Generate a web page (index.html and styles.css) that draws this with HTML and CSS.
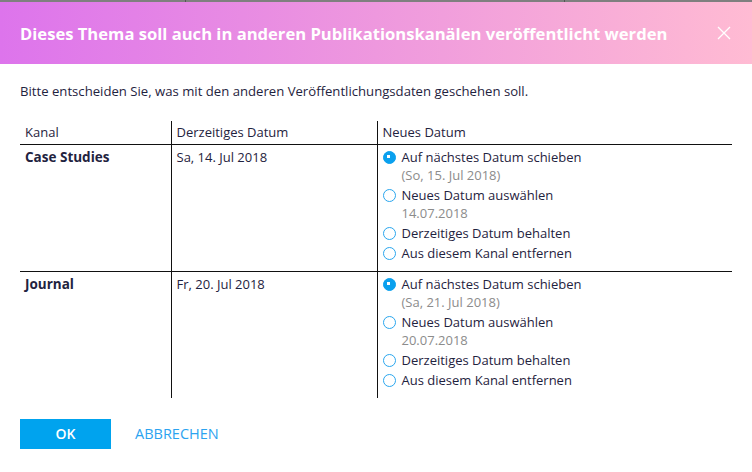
FILE: index.html
```html
<!DOCTYPE html>
<html lang="de">
<head>
<meta charset="utf-8">
<link rel="stylesheet" href="styles.css">
</head>
<body>
<div class="backdrop"></div>
<div class="dialog">
  <header class="dlg-head">
    <h1 class="dlg-title">Dieses Thema soll auch in anderen Publikationskanälen veröffentlicht werden</h1>
    <button class="close" aria-label="Schließen">
      <svg width="14" height="14" viewBox="0 0 14 14"><path d="M1 1 L13 13 M13 1 L1 13" stroke="#fff" stroke-width="1.3" fill="none"/></svg>
    </button>
  </header>
  <div class="dlg-body">
    <p class="intro">Bitte entscheiden Sie, was mit den anderen Veröffentlichungsdaten geschehen soll.</p>
    <table class="channels">
      <thead>
        <tr><th class="c1">Kanal</th><th class="c2">Derzeitiges Datum</th><th class="c3">Neues Datum</th></tr>
      </thead>
      <tbody>
        <tr>
          <td class="c1 name">Case Studies</td>
          <td class="c2 date">Sa, 14. Jul 2018</td>
          <td class="c3">
            <div class="opt"><span class="radio on"></span><div><div class="main">Auf nächstes Datum schieben</div><div class="sub">(So, 15. Jul 2018)</div></div></div>
            <div class="opt"><span class="radio"></span><div><div class="main">Neues Datum auswählen</div><div class="sub">14.07.2018</div></div></div>
            <div class="opt"><span class="radio"></span><div><div class="main">Derzeitiges Datum behalten</div></div></div>
            <div class="opt"><span class="radio"></span><div><div class="main">Aus diesem Kanal entfernen</div></div></div>
          </td>
        </tr>
        <tr>
          <td class="c1 name">Journal</td>
          <td class="c2 date">Fr, 20. Jul 2018</td>
          <td class="c3">
            <div class="opt"><span class="radio on"></span><div><div class="main">Auf nächstes Datum schieben</div><div class="sub">(Sa, 21. Jul 2018)</div></div></div>
            <div class="opt"><span class="radio"></span><div><div class="main">Neues Datum auswählen</div><div class="sub">20.07.2018</div></div></div>
            <div class="opt"><span class="radio"></span><div><div class="main">Derzeitiges Datum behalten</div></div></div>
            <div class="opt"><span class="radio"></span><div><div class="main">Aus diesem Kanal entfernen</div></div></div>
          </td>
        </tr>
      </tbody>
    </table>
    <div class="actions">
      <button class="btn-ok">OK</button>
      <button class="btn-cancel">ABBRECHEN</button>
    </div>
  </div>
</div>
</body>
</html>
```

FILE: styles.css
```css
* { box-sizing: border-box; }
html, body { margin: 0; padding: 0; background: #fff; }
body {
  font-family: "Open Sans", "Noto Sans", sans-serif;
  color: #1f2340;
  width: 752px;
  height: 472px;
  overflow: hidden;
}
.backdrop {
  height: 2px;
  background:
    linear-gradient(to right, transparent 185px, #555 185px, #555 186px, transparent 186px, transparent 564px, #555 564px, #555 565px, transparent 565px),
    #7f7f7f;
}
.dlg-head {
  height: 62px;
  display: flex;
  align-items: center;
  justify-content: space-between;
  padding: 0 21px 0 20px;
  background: linear-gradient(to right, #dd74ec 0%, #ee98de 50%, #ffbbd3 100%);
}
.dlg-title {
  margin: 0;
  font-size: 16.6px;
  font-weight: 700;
  color: #fff;
  white-space: nowrap;
}
.close {
  border: 0;
  background: none;
  padding: 0;
  width: 14px;
  height: 14px;
  display: flex;
  margin-top: -1px;
}
.dlg-body { padding: 18px 20px 0 20px; }
.intro {
  margin: 0 0 21px 0;
  font-size: 13.15px;
  line-height: 18px;
}
.channels {
  width: 712px;
  border-collapse: collapse;
  font-size: 13px;
}
.channels th {
  font-weight: 400;
  text-align: left;
  height: 23px;
  padding: 0 0 1px 5px;
  vertical-align: middle;
  border-bottom: 1px solid #111;
}
.channels td {
  vertical-align: top;
  padding: 3px 0 9px 5px;
  line-height: 18px;
}
.channels tbody tr:first-child td { border-bottom: 1px solid #111; }
.c1 { width: 151px; }
.c2 { width: 206px; border-left: 1px solid #111; }
.c3 { border-left: 1px solid #111; }
.name { font-weight: 700; font-size: 13.5px; }
.opt {
  display: flex;
  align-items: flex-start;
  margin-bottom: 2px;
}
.opt:last-child { margin-bottom: 0; }
.radio {
  flex: none;
  width: 13px;
  height: 13px;
  border-radius: 50%;
  border: 1.5px solid #2aa6ee;
  margin: 3px 6px 0 0;
  position: relative;
}
.radio.on {
  background: #0aa0ee;
  border-color: #0aa0ee;
}
.radio.on::after {
  content: "";
  position: absolute;
  left: 3.5px;
  top: 3.5px;
  width: 3px;
  height: 3px;
  background: #fff;
}
.main { line-height: 18px; }
.sub { line-height: 18px; color: #8c8c8c; }
.actions {
  display: flex;
  align-items: center;
  gap: 24px;
  margin-top: 21px;
}
.btn-ok {
  width: 91px;
  height: 30px;
  border: 0;
  background: #00a3ee;
  color: #fff;
  font-family: inherit;
  font-size: 14px;
  font-weight: 600;
}
.btn-cancel {
  border: 0;
  background: none;
  padding: 0;
  color: #2ba3f0;
  font-family: inherit;
  font-size: 14.5px;
}
```
